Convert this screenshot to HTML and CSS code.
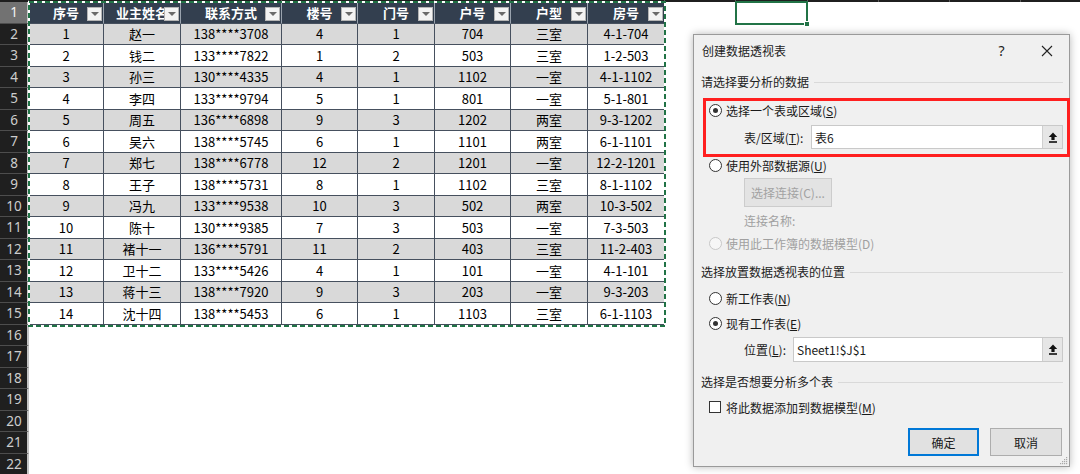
FILE: index.html
```html
<!DOCTYPE html>
<html lang="zh-CN">
<head>
<meta charset="utf-8">
<title>创建数据透视表</title>
<link rel="stylesheet" href="styles.css">
</head>
<body>
<div class="screen">
  <div class="topstrip">
    <i class="ts rhw"></i><i class="ts a"></i><i class="ts b"></i><i class="ts cc"></i><i class="ts d"></i><i class="ts e"></i><i class="ts f"></i><i class="ts g"></i><i class="ts h"></i><i class="ts iw"></i><i class="ts jw"></i><i class="ts kw"></i><i class="ts kw"></i><i class="ts kw"></i>
  </div>
  <div class="sheet">
    <div class="row hd"><div class="rh sel">1</div>
      <div class="c a">序号<span class="fb"></span></div><div class="c b">业主姓名<span class="fb"></span></div><div class="c cc">联系方式<span class="fb"></span></div><div class="c d">楼号<span class="fb"></span></div><div class="c e">门号<span class="fb"></span></div><div class="c f">户号<span class="fb"></span></div><div class="c g">户型<span class="fb"></span></div><div class="c h">房号<span class="fb"></span></div>
    </div>
    <div class="row gr"><div class="rh">2</div><div class="c a">1</div><div class="c b">赵一</div><div class="c cc">138****3708</div><div class="c d">4</div><div class="c e">1</div><div class="c f">704</div><div class="c g">三室</div><div class="c h">4-1-704</div></div>
    <div class="row"><div class="rh">3</div><div class="c a">2</div><div class="c b">钱二</div><div class="c cc">133****7822</div><div class="c d">1</div><div class="c e">2</div><div class="c f">503</div><div class="c g">三室</div><div class="c h">1-2-503</div></div>
    <div class="row gr"><div class="rh">4</div><div class="c a">3</div><div class="c b">孙三</div><div class="c cc">130****4335</div><div class="c d">4</div><div class="c e">1</div><div class="c f">1102</div><div class="c g">一室</div><div class="c h">4-1-1102</div></div>
    <div class="row"><div class="rh">5</div><div class="c a">4</div><div class="c b">李四</div><div class="c cc">133****9794</div><div class="c d">5</div><div class="c e">1</div><div class="c f">801</div><div class="c g">一室</div><div class="c h">5-1-801</div></div>
    <div class="row gr"><div class="rh">6</div><div class="c a">5</div><div class="c b">周五</div><div class="c cc">136****6898</div><div class="c d">9</div><div class="c e">3</div><div class="c f">1202</div><div class="c g">两室</div><div class="c h">9-3-1202</div></div>
    <div class="row"><div class="rh">7</div><div class="c a">6</div><div class="c b">吴六</div><div class="c cc">138****5745</div><div class="c d">6</div><div class="c e">1</div><div class="c f">1101</div><div class="c g">两室</div><div class="c h">6-1-1101</div></div>
    <div class="row gr"><div class="rh">8</div><div class="c a">7</div><div class="c b">郑七</div><div class="c cc">138****6778</div><div class="c d">12</div><div class="c e">2</div><div class="c f">1201</div><div class="c g">一室</div><div class="c h">12-2-1201</div></div>
    <div class="row"><div class="rh">9</div><div class="c a">8</div><div class="c b">王子</div><div class="c cc">138****5731</div><div class="c d">8</div><div class="c e">1</div><div class="c f">1102</div><div class="c g">三室</div><div class="c h">8-1-1102</div></div>
    <div class="row gr"><div class="rh">10</div><div class="c a">9</div><div class="c b">冯九</div><div class="c cc">133****9538</div><div class="c d">10</div><div class="c e">3</div><div class="c f">502</div><div class="c g">两室</div><div class="c h">10-3-502</div></div>
    <div class="row"><div class="rh">11</div><div class="c a">10</div><div class="c b">陈十</div><div class="c cc">130****9385</div><div class="c d">7</div><div class="c e">3</div><div class="c f">503</div><div class="c g">一室</div><div class="c h">7-3-503</div></div>
    <div class="row gr"><div class="rh">12</div><div class="c a">11</div><div class="c b">褚十一</div><div class="c cc">136****5791</div><div class="c d">11</div><div class="c e">2</div><div class="c f">403</div><div class="c g">三室</div><div class="c h">11-2-403</div></div>
    <div class="row"><div class="rh">13</div><div class="c a">12</div><div class="c b">卫十二</div><div class="c cc">133****5426</div><div class="c d">4</div><div class="c e">1</div><div class="c f">101</div><div class="c g">一室</div><div class="c h">4-1-101</div></div>
    <div class="row gr"><div class="rh">14</div><div class="c a">13</div><div class="c b">蒋十三</div><div class="c cc">138****7920</div><div class="c d">9</div><div class="c e">3</div><div class="c f">203</div><div class="c g">一室</div><div class="c h">9-3-203</div></div>
    <div class="row"><div class="rh">15</div><div class="c a">14</div><div class="c b">沈十四</div><div class="c cc">138****5453</div><div class="c d">6</div><div class="c e">1</div><div class="c f">1103</div><div class="c g">三室</div><div class="c h">6-1-1103</div></div>
    <div class="row"><div class="rh">16</div></div>
    <div class="row"><div class="rh">17</div></div>
    <div class="row"><div class="rh">18</div></div>
    <div class="row"><div class="rh">19</div></div>
    <div class="row"><div class="rh">20</div></div>
    <div class="row"><div class="rh">21</div></div>
    <div class="row"><div class="rh">22</div></div>
  </div>

  <svg class="ants" width="638" height="326" viewBox="0 0 638 326">
    <rect x="1" y="1" width="636" height="324" fill="none" stroke="#ffffff" stroke-width="2"/>
    <rect x="1" y="1" width="636" height="324" fill="none" stroke="#217346" stroke-width="2" stroke-dasharray="5 3"/>
  </svg>

  <div class="selbox"><span class="handle"></span></div>

  <div class="dialog">
    <div class="dtitle">
      <span class="dtext">创建数据透视表</span>
      <span class="tbtn">?</span>
      <span class="tbtn"><svg width="12" height="12" viewBox="0 0 12 12"><path d="M1 1 L11 11 M11 1 L1 11" stroke="#222" stroke-width="1.1" fill="none"/></svg></span>
    </div>
    <div class="dbody">
      <div class="sec s1"><span>请选择要分析的数据</span><i class="rule"></i></div>
      <div class="opt m9"><span class="radio on"></span><span>选择一个表或区域(<u>S</u>)</span></div>
      <div class="field m5"><span class="lab lt">表/区域(<u>T</u>):</span><span class="inp"><span class="val">表6</span><span class="rbtn"><svg width="10" height="11" viewBox="0 0 10 11"><path d="M5 0.5 L9.2 5 H6.6 V8 H3.4 V5 H0.8 Z" fill="#111"/><rect x="1" y="9.2" width="8" height="1.6" fill="#111"/></svg></span></span></div>
      <div class="opt m6"><span class="radio"></span><span>使用外部数据源(<u>U</u>)</span></div>
      <div class="dbtnrow m3"><span class="dbtn">选择连接(C)...</span></div>
      <div class="note m3">连接名称:</div>
      <div class="opt m3 dis"><span class="radio off"></span><span>使用此工作簿的数据模型(D)</span></div>
      <div class="sec m9"><span>选择放置数据透视表的位置</span><i class="rule"></i></div>
      <div class="opt m7"><span class="radio"></span><span>新工作表(<u>N</u>)</span></div>
      <div class="opt m5"><span class="radio on"></span><span>现有工作表(<u>E</u>)</span></div>
      <div class="field fl m4"><span class="lab ll">位置(<u>L</u>):</span><span class="inp"><span class="val">Sheet1!$J$1</span><span class="rbtn"><svg width="10" height="11" viewBox="0 0 10 11"><path d="M5 0.5 L9.2 5 H6.6 V8 H3.4 V5 H0.8 Z" fill="#111"/><rect x="1" y="9.2" width="8" height="1.6" fill="#111"/></svg></span></span></div>
      <div class="sec m10"><span>选择是否想要分析多个表</span><i class="rule"></i></div>
      <div class="opt chk m6"><span class="cbox"></span><span>将此数据添加到数据模型(<u>M</u>)</span></div>
      <div class="footer m11"><span class="pbtn ok">确定</span><span class="pbtn">取消</span></div>
    </div>
    <div class="redbox"></div>
    <svg class="grip" width="10" height="10" viewBox="0 0 10 10"><g fill="#a8a8a8"><rect x="8" y="2" width="1.2" height="1.2"/><rect x="6" y="4" width="1.2" height="1.2"/><rect x="8" y="4" width="1.2" height="1.2"/><rect x="4" y="6" width="1.2" height="1.2"/><rect x="6" y="6" width="1.2" height="1.2"/><rect x="8" y="6" width="1.2" height="1.2"/><rect x="2" y="8" width="1.2" height="1.2"/><rect x="4" y="8" width="1.2" height="1.2"/><rect x="6" y="8" width="1.2" height="1.2"/><rect x="8" y="8" width="1.2" height="1.2"/></g></svg>
  </div>
</div>
</body>
</html>
```

FILE: styles.css
```css
* { box-sizing: border-box; }
html, body { margin: 0; padding: 0; }
body {
  width: 1080px;
  height: 474px;
  overflow: hidden;
  background: #ffffff;
  font-family: "Noto Sans CJK SC", "Noto Sans", sans-serif;
}
.screen {
  position: relative;
  width: 1080px;
  height: 474px;
  overflow: hidden;
  background: #ffffff;
}

/* top strip (cut-off column header) */
.topstrip {
  height: 2px;
  display: flex;
  background: #1f1f1f;
}
.ts { display: block; height: 2px; border-right: 1px solid #5a5a5a; flex: none; }
.ts.rhw { width: 29px; }
.ts.iw { width: 71px; }
.ts.jw { width: 72px; }
.ts.kw { width: 71px; }

/* sheet rows */
.sheet { display: flex; flex-direction: column; }
.row { display: flex; height: 21.5px; flex: none; }
.rh {
  width: 29px;
  flex: none;
  background: #1f1f1f;
  border-right: 2px solid #c4c4c4;
  border-bottom: 1px solid #4d4d4d;
  color: #cdcdcd;
  font-family: "Noto Sans", sans-serif;
  font-size: 13.5px;
  display: flex;
  align-items: center;
  justify-content: center;
  padding-left: 1px;
}
.rh.sel { background: #727272; color: #f2f2f2; }

.c {
  flex: none;
  position: relative;
  border-right: 1px solid #46505e;
  border-bottom: 1px solid #46505e;
  display: flex;
  align-items: center;
  justify-content: center;
  font-size: 13px;
  color: #000000;
  white-space: nowrap;
  overflow: hidden;
  background: #ffffff;
}
.a { width: 75px; }
.b { width: 77px; }
.cc { width: 101px; }
.d { width: 76px; }
.e { width: 77px; }
.f { width: 76px; }
.g { width: 77px; }
.h { width: 77px; }
.row.gr .c { background: #d9d9d9; }

.row.hd .c {
  background: #333f4f;
  color: #ffffff;
  font-weight: bold;
  border-right-color: #9aa3ae;
  border-bottom-color: #46505e;
}
.fb {
  position: absolute;
  right: 1px;
  bottom: 2px;
  width: 15px;
  height: 14px;
  background: #f3f3f3;
  border: 1px solid #b5b5b5;
  display: flex;
  align-items: center;
  justify-content: center;
}
.fb::after {
  content: "";
  width: 0;
  height: 0;
  border-left: 4px solid transparent;
  border-right: 4px solid transparent;
  border-top: 4px solid #6a6a6a;
  margin-top: 1px;
}

/* marching ants around copied table */
.ants {
  position: absolute;
  left: 28px;
  top: 1px;
}

/* selected cell J1 */
.selbox {
  position: absolute;
  left: 735px;
  top: 1px;
  width: 73px;
  height: 24px;
  border: 2px solid #217346;
}
.handle {
  position: absolute;
  right: -4px;
  bottom: -4px;
  width: 6px;
  height: 6px;
  background: #217346;
  border: 1px solid #ffffff;
}

/* dialog */
.dialog {
  position: absolute;
  left: 693px;
  top: 34px;
  width: 377px;
  height: 433px;
  background: #f0f0f0;
  border: 1px solid #9a9a9a;
  box-shadow: 0 0 8px rgba(0, 0, 0, 0.28);
  font-family: "Noto Sans CJK SC", sans-serif;
  font-size: 12px;
  color: #1a1a1a;
}
.dtitle {
  height: 31px;
  display: flex;
  align-items: center;
  background: #f0f0f0;
  padding-left: 8px;
}
.dtext { flex: 1; color: #222222; }
.tbtn {
  width: 45px;
  height: 31px;
  display: flex;
  align-items: center;
  justify-content: center;
  font-family: "Noto Sans", sans-serif;
  font-size: 14px;
  color: #222222;
}
.dbody {
  padding: 0 6px 0 7px;
  display: flex;
  flex-direction: column;
}
.sec {
  height: 19px;
  display: flex;
  align-items: center;
  gap: 5px;
  color: #222222;
}
.sec.s1 { margin-top: 6px; }
.rule { flex: 1; height: 1px; background: #d9d9d9; margin-top: 1px; }

.opt {
  height: 20px;
  display: flex;
  align-items: center;
  padding-left: 8px;
  gap: 4px;
}
.opt.dis { color: #a0a0a0; }
.radio {
  width: 13px;
  height: 13px;
  border: 1px solid #333333;
  border-radius: 50%;
  background: #ffffff;
  flex: none;
  display: flex;
  align-items: center;
  justify-content: center;
}
.radio.on::after {
  content: "";
  width: 5px;
  height: 5px;
  border-radius: 50%;
  background: #333333;
}
.radio.off { border-color: #c8c8c8; background: #f6f6f6; }
.opt.chk { gap: 5px; }
.cbox {
  width: 12px;
  height: 12px;
  border: 1px solid #333333;
  background: #ffffff;
  flex: none;
}

.field {
  height: 24px;
  display: flex;
  align-items: center;
  padding-left: 43px;
}
.field.fl { height: 25px; }
.lab { flex: none; }
.lab.lt { width: 67px; }
.lab.ll { width: 49px; }
.inp {
  flex: 1;
  height: 100%;
  display: flex;
  background: #ffffff;
  border: 1px solid #c9c9c9;
}
.val {
  flex: 1;
  display: flex;
  align-items: center;
  padding-left: 3px;
  color: #1a1a1a;
}
.rbtn {
  width: 20px;
  flex: none;
  background: #e6e6e6;
  border-left: 1px solid #cfcfcf;
  display: flex;
  align-items: center;
  justify-content: center;
}

.dbtnrow { height: 29px; display: flex; padding-left: 43px; }
.dbtn {
  width: 88px;
  height: 29px;
  display: flex;
  align-items: center;
  justify-content: center;
  background: #e3e3e3;
  border: 1px solid #cccccc;
  color: #a2a2a2;
}
.note {
  height: 20px;
  display: flex;
  align-items: center;
  padding-left: 43px;
  color: #a0a0a0;
}

.footer {
  height: 28px;
  display: flex;
  justify-content: flex-end;
  gap: 11px;
  padding-right: 1px;
}
.pbtn {
  width: 72px;
  height: 28px;
  display: flex;
  align-items: center;
  justify-content: center;
  background: #e1e1e1;
  border: 1px solid #adadad;
  color: #1a1a1a;
}
.pbtn.ok { width: 71px; border: 2px solid #0078d7; }

.m3 { margin-top: 3px; }
.m4 { margin-top: 4px; }
.m5 { margin-top: 5px; }
.m6 { margin-top: 6px; }
.m7 { margin-top: 7px; }
.m9 { margin-top: 9px; }
.m10 { margin-top: 10px; }
.m11 { margin-top: 11px; }

.redbox {
  position: absolute;
  left: 9px;
  top: 62.5px;
  width: 367px;
  height: 59px;
  border: 3px solid #ff1f1f;
}
.grip {
  position: absolute;
  right: 1px;
  bottom: 1px;
}
```
